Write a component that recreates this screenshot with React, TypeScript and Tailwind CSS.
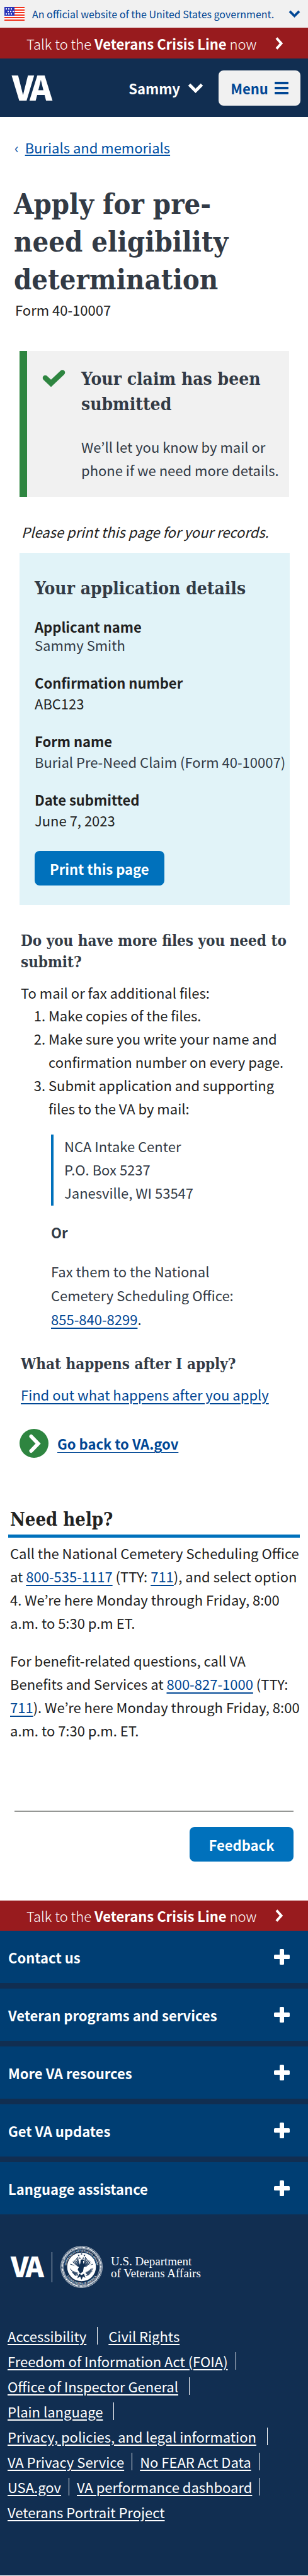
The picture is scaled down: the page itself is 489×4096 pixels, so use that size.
import React from "react";

const serif = "font-['DejaVu_Serif_Condensed','DejaVu_Serif',serif] font-bold";
const link = "text-[#004795] underline decoration-2 underline-offset-4";

function Chevron({ className, dir }: { className: string; dir: "down" | "right" }) {
  return dir === "down" ? (
    <svg viewBox="0 0 24 16" className={className} fill="none" stroke="currentColor" strokeWidth="5" aria-hidden="true">
      <path d="M2 2.5 12 12.5 22 2.5" />
    </svg>
  ) : (
    <svg viewBox="0 0 12 20" className={className} fill="none" stroke="currentColor" strokeWidth="4" aria-hidden="true">
      <path d="M2 1.5 9.5 10 2 18.5" />
    </svg>
  );
}

function VaLogo({ className }: { className: string }) {
  return (
    <svg viewBox="0 0 64 40" className={`overflow-visible ${className}`} fill="currentColor" role="img" aria-label="VA">
      <g className="font-['Noto_Sans_CJK_KR','Noto_Sans',sans-serif] font-black" fontSize="54">
        <text x="0" y="40">V</text>
        <text x="64" y="40" textAnchor="end">A</text>
      </g>
    </svg>
  );
}

function Flag() {
  const stars = [
    [2, 2.2], [6, 2.2], [10, 2.2],
    [5, 6.2], [9, 6.2], [13, 6.2],
    [2, 10.2], [6, 10.2], [10, 10.2],
  ];
  return (
    <svg viewBox="0 0 32 22" className="h-[22px] w-8 shrink-0" aria-hidden="true">
      <rect width="32" height="22" fill="#fff" />
      {[0, 4, 8, 12, 16, 20].map((y) => (
        <rect key={y} y={y} width="32" height="2" fill="#f1311b" />
      ))}
      <rect width="16" height="14" fill="#2a33b7" />
      {stars.map(([x, y]) => (
        <rect key={`${x}-${y}`} x={x} y={y} width="2" height="2" fill="#fff" />
      ))}
    </svg>
  );
}

function CrisisLine({ className }: { className: string }) {
  return (
    <a href="#crisis" className={`flex items-center bg-[#981b1e] pl-[42px] pr-10 text-[22px] leading-[30px] text-white ${className}`}>
      <span className="flex-1 whitespace-nowrap font-light">
        Talk to the <strong className="font-bold">Veterans Crisis Line</strong> now
      </span>
      <Chevron dir="right" className="h-5 w-3" />
    </a>
  );
}

function Seal() {
  const feathers = [0, 1, 2, 3, 4, 5, 6];
  return (
    <svg viewBox="0 0 88 88" className="h-[67px] w-[67px] shrink-0 overflow-visible" aria-label="Department of Veterans Affairs seal" role="img">
      <defs>
        <path id="sealTop" d="M13.5 53A31.8 31.8 0 1 1 74.500 53" />
        <path id="sealBottom" d="M8.2 50A36.3 36.3 0 0 0 79.800 50" />
      </defs>
      <circle cx="44" cy="44" r="43.3" fill="none" stroke="#fff" strokeWidth="0.9" />
      <circle cx="44" cy="44" r="40.2" fill="none" stroke="#fff" strokeWidth="3.6" strokeDasharray="1.7 0.8" />
      <circle cx="44" cy="44" r="37.6" fill="none" stroke="#fff" strokeWidth="0.7" />
      <circle cx="44" cy="44" r="30" fill="#fff" />
      <g fill="#fff" className="font-['Liberation_Serif',serif] font-bold" fontSize="5">
        <text textAnchor="middle"><textPath href="#sealTop" startOffset="50%">DEPARTMENT OF VETERANS AFFAIRS</textPath></text>
        <text textAnchor="middle"><textPath href="#sealBottom" startOffset="50%">UNITED STATES OF AMERICA</textPath></text>
      </g>
      <g fill="#112e51">
        {[[44, 17], [38, 20], [50, 20], [40.5, 25.5], [47.5, 25.5]].map(([x, y]) => (
          <path key={`${x}-${y}`} transform={`translate(${x} ${y})`} d="M0-2.4.6-.7 2.4-.7 1 .4 1.5 2.2 0 1.1-1.5 2.2-1 .4-2.4-.7-.6-.7Z" />
        ))}
        <path d="M42 30c3-3 7-2 8 1l-3 1c0 4 2 6 2 10l-2 12-6 4-5-8c2-6 6-10 6-20Z" />
        <path d="M25 52c4 2 8 4 12 4l-6 7c-3-3-5-6-6-11Z" opacity=".75" />
        <path d="M52 55c5-1 9-4 13-9 0 7-3 12-8 17Z" opacity=".75" />
        <path d="M39 58l5 3 5-3 3 9-5-3-3 7-3-7-6 4Z" />
      </g>
      <g stroke="#112e51" fill="none" strokeWidth="1.5">
        {feathers.map((i) => (
          <path key={`l${i}`} d={`M40 ${44 - i * 0.6}Q${30 + i} ${42 - i * 1.6} ${20.5 + i * 2.6} ${38 - i * 2.4}`} />
        ))}
        {feathers.map((i) => (
          <path key={`r${i}`} d={`M48 ${44 - i * 0.6}Q${58 - i} ${42 - i * 1.6} ${67.5 - i * 2.6} ${38 - i * 2.4}`} />
        ))}
        <path d="M21 48q6 10 16 12M24 55q5 6 13 8M66 52q-5 8-14 11M68 46q-5 10-16 12" strokeDasharray="2 1" />
      </g>
      <path d="M20 33l17 13M68 34L51 48" stroke="#fff" strokeWidth="3" />
    </svg>
  );
}

const details = [
  { label: "Applicant name", value: "Sammy Smith", cls: "text-[#323a45]" },
  { label: "Confirmation number", value: "ABC123", cls: "pt-1" },
  { label: "Form name", value: "Burial Pre-Need Claim (Form 40-10007)", cls: "pt-1 text-[#323a45] whitespace-nowrap" },
  { label: "Date submitted", value: "June 7, 2023", cls: "pt-1" },
];

const sections = ["Contact us", "Veteran programs and services", "More VA resources", "Get VA updates", "Language assistance"];

type FooterItem = { text: string; bar?: "wide" | "narrow" };
const footerRows: FooterItem[][] = [
  [{ text: "Accessibility", bar: "wide" }, { text: "Civil Rights" }],
  [{ text: "Freedom of Information Act (FOIA)", bar: "narrow" }],
  [{ text: "Office of Inspector General", bar: "wide" }],
  [{ text: "Plain language", bar: "wide" }],
  [{ text: "Privacy, policies, and legal information", bar: "wide" }],
  [{ text: "VA Privacy Service", bar: "narrow" }, { text: "No FEAR Act Data", bar: "narrow" }],
  [{ text: "USA.gov", bar: "narrow" }, { text: "VA performance dashboard", bar: "narrow" }],
  [{ text: "Veterans Portrait Project" }],
];

export default function App() {
  return (
    <div className="bg-white font-['Noto_Sans_CJK_KR','Noto_Sans',sans-serif] text-[22px] leading-[30px] text-[#212121]">
      <button type="button" className="flex h-11 w-full items-center bg-[#f1f1f1] pl-[7px] pr-3 text-left text-[16px] text-[#004795]">
        <Flag />
        <span className="ml-3 flex-1 whitespace-nowrap">An official website of the United States government.</span>
        <Chevron dir="down" className="h-3 w-[19px] shrink-0" />
      </button>
      <CrisisLine className="h-[49px]" />
      <header className="flex h-[93px] items-center justify-between bg-[#112e51] pl-[19px] pr-3 text-white">
        <a href="#home"><VaLogo className="h-10 w-16" /></a>
        <div className="flex items-center gap-6">
          <button type="button" className="flex items-center gap-3 font-bold">
            Sammy
            <Chevron dir="down" className="h-4 w-[25px]" />
          </button>
          <button type="button" className="flex h-14 w-[130px] items-center justify-center gap-[10px] rounded-lg bg-[#f1f1f1] font-bold text-[#004795]">
            Menu
            <svg viewBox="0 0 22 20" className="h-5 w-[22px]" fill="currentColor" aria-hidden="true">
              <rect y="0" width="22" height="4" rx="1" />
              <rect y="8" width="22" height="4" rx="1" />
              <rect y="16" width="22" height="4" rx="1" />
            </svg>
          </button>
        </div>
      </header>

      <main>
        <nav className="flex gap-[10px] pl-[23px] pt-[33px] text-[#0050a4]">
          <span>‹</span>
          <a href="#burials" className="underline decoration-2 underline-offset-2">Burials and memorials</a>
        </nav>
        <h1 className={`${serif} mt-[46px] px-[22px] text-[45px] leading-[60px] text-[#323a45]`}>
          Apply for pre-<br />need eligibility<br />determination
        </h1>
        <p className="mt-[2px] px-6">Form 40-10007</p>

        <section className="ml-[31px] mr-[30px] mt-[51px] flex border-l-12 border-[#2e8540] bg-[#f1f1f1] pb-6 pl-6 pt-[25px] text-[#323a45]">
          <svg viewBox="0 0 37 28" className="mt-1 h-7 w-[37px] shrink-0" aria-hidden="true">
            <path d="M5 14 14 22.500 32 5.500" fill="none" stroke="#2e8540" strokeWidth="8.500" strokeLinecap="round" strokeLinejoin="miter" />
          </svg>
          <div className="ml-[25px]">
            <h2 className={`${serif} whitespace-nowrap text-[28px] leading-10`}>Your claim has been<br />submitted</h2>
            <p className="mt-[29px] whitespace-nowrap leading-[37px]">We’ll let you know by mail or<br />phone if we need more details.</p>
          </div>
        </section>

        <p className="mt-10 px-[34px] italic">Please print this page for your records.</p>

        <section className="ml-[31px] mr-[29px] mt-[19px] bg-[#e1f3f8] pb-[31px] pl-6 pt-[39px]">
          <h2 className={`${serif} whitespace-nowrap text-[28px] leading-9 text-[#323a45]`}>Your application details</h2>
          <dl className="mt-7 flex flex-col gap-[31px] leading-[29px]">
            {details.map((d) => (
              <div key={d.label}>
                <dt className="font-bold">{d.label}</dt>
                <dd className={d.cls}>{d.value}</dd>
              </div>
            ))}
          </dl>
          <button type="button" className="mt-[34px] h-[55px] rounded-lg bg-[#0071bc] px-6 font-bold text-white">Print this page</button>
        </section>

        <section className="px-[33px]">
          <h2 className={`${serif} mt-10 whitespace-nowrap text-[24px] leading-[34px] text-[#323a45]`}>Do you have more files you need to<br />submit?</h2>
          <p className="mt-4">To mail or fax additional files:</p>
          <ol className="mt-[3px] list-decimal pl-11 leading-[37px]">
            <li>Make copies of the files.</li>
            <li className="whitespace-nowrap">Make sure you write your name and<br />confirmation number on every page.</li>
            <li>Submit application and supporting<br />files to the VA by mail:</li>
          </ol>
          <div className="ml-12 text-[#323a45]">
            <address className="mt-[23px] border-l-4 border-[#0071bc] pb-[2px] pl-[17px] not-italic leading-[37px]">
              NCA Intake Center<br />P.O. Box 5237<br />Janesville, WI 53547
            </address>
            <p className="mt-6 font-bold leading-[37px]">Or</p>
            <p className="mt-6 leading-[38px]">
              Fax them to the National<br />Cemetery Scheduling Office:<br />
              <a href="tel:8558408299" className={link}>855-840-8299</a>.
            </p>
          </div>
          <h2 className={`${serif} mt-9 whitespace-nowrap text-[24px] leading-[34px] text-[#323a45]`}>What happens after I apply?</h2>
          <p className="mt-4"><a href="#after" className={link}>Find out what happens after you apply</a></p>
        </section>

        <a href="#va" className="ml-[31px] mt-10 flex items-center gap-[14px] font-bold text-[#004795]">
          <svg viewBox="0 0 46 46" className="h-[46px] w-[46px]" aria-hidden="true">
            <circle cx="23" cy="23" r="23" fill="#2e8540" />
            <path d="M18.500 12 29.500 23.500 18.500 35" fill="none" stroke="#fff" strokeWidth="6" strokeLinecap="round" />
          </svg>
          <span className="underline decoration-1 underline-offset-4">Go back to VA.gov</span>
        </a>

        <section className="px-[13px]">
          <h2 className={`${serif} mt-[78px] border-b-5 border-[#0071bc] pb-1 pl-[3px] text-[29px] leading-10`}>
            Need help?
          </h2>
          <div className="whitespace-nowrap pl-[3px] leading-[37px]">
            <p className="mt-[6px]">
              Call the National Cemetery Scheduling Office<br />
              at <a href="tel:8005351117" className={link}>800-535-1117</a> (TTY: <a href="tel:711" className={link}>711</a>), and select option<br />
              4. We’re here Monday through Friday, 8:00<br />a.m. to 5:30 p.m ET.
            </p>
            <p className="mt-[23px]">
              For benefit-related questions, call VA<br />
              Benefits and Services at <a href="tel:8008271000" className={link}>800-827-1000</a> (TTY:<br />
              <a href="tel:711" className={link}>711</a>). We’re here Monday through Friday, 8:00<br />a.m. to 7:30 p.m. ET.
            </p>
          </div>
        </section>

        <div className="mx-[23px] mt-[109px] flex justify-end border-t-2 border-[#959795] pt-6">
          <button type="button" className="h-[55px] w-[165px] rounded-lg bg-[#0071bc] font-bold text-white">Feedback</button>
        </div>
      </main>

      <footer className="mt-[62px] bg-[#112e51] text-white">
        <CrisisLine className="h-12" />
        <div className="flex flex-col gap-[9px]">
          {sections.map((s) => (
            <button key={s} type="button" className="flex h-[83px] items-center justify-between bg-[#003e73] pl-[13px] pr-[29px] font-bold">
              {s}
              <svg viewBox="0 0 25 25" className="h-[25px] w-[25px]" fill="currentColor" aria-hidden="true">
                <rect x="9" width="7" height="25" rx="1.500" />
                <rect y="9" width="25" height="7" rx="1.500" />
              </svg>
            </button>
          ))}
        </div>
        <div className="flex items-center pl-[17px] pt-[50px]">
          <VaLogo className="h-[33px] w-[53px]" />
          <span className="ml-3 h-12 w-px bg-white/80" />
          <span className="ml-[13px] flex"><Seal /></span>
          <span className="ml-[13px] font-['Liberation_Serif',serif] text-[19px] leading-[19px]">U.S. Department<br />of Veterans Affairs</span>
        </div>
        <nav className="mt-14 pb-[81px] pl-3 leading-10">
          {footerRows.map((row) => (
            <div key={row[0].text} className="flex items-center whitespace-nowrap">
              {row.map((item) => (
                <React.Fragment key={item.text}>
                  <a href="#footer" className="underline decoration-2 underline-offset-3">{item.text}</a>
                  {item.bar === "wide" && <span className="mx-[17px] h-[28px] w-px bg-white" />}
                  {item.bar === "narrow" && <span className="mx-3 h-[28px] w-px bg-white" />}
                </React.Fragment>
              ))}
            </div>
          ))}
        </nav>
      </footer>
    </div>
  );
}
